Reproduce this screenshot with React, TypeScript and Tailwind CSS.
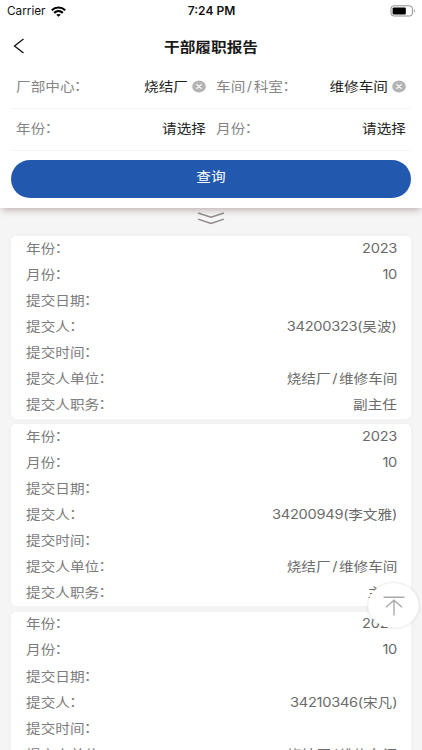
type Entry = { year: string; month: string; person: string; unit: string; duty: string };

const entries: Entry[] = [
  { year: "2023", month: "10", person: "34200323(吴波)", unit: "烧结厂/维修车间", duty: "副主任" },
  { year: "2023", month: "10", person: "34200949(李文雅)", unit: "烧结厂/维修车间", duty: "主任" },
  { year: "2023", month: "10", person: "34210346(宋凡)", unit: "烧结厂/维修车间", duty: "主任" },
];

function Parts({ text }: { text: string }) {
  return (
    <>
      {text.split(/([\d(]+|\/)/).map((part, i) => (
        <span key={i} className={/\d/.test(part) ? "tracking-[-0.26px]" : part === "/" ? "mx-[1.4px]" : ""}>
          {part}
        </span>
      ))}
    </>
  );
}

function Label({ text }: { text: string }) {
  return (
    <span className="inline-block origin-left scale-x-[1.125] whitespace-nowrap">
      <Parts text={text} />
      <span className="relative -top-px -ml-[0.5px]">：</span>
    </span>
  );
}

function Value({ text }: { text: string }) {
  return (
    <span className="inline-block origin-right scale-x-[1.125] whitespace-nowrap">
      <Parts text={text} />
    </span>
  );
}

function StatusBar() {
  return (
    <div className="grid h-[22px] grid-cols-3 items-center pl-[7px] pr-[6px] text-[12px] text-[#111]">
      <div className="flex items-center gap-[5px]">
        <span className="w-[39px] origin-left scale-x-[0.98]">Carrier</span>
        <svg width="15" height="11" viewBox="0 0 15 11" fill="none" stroke="#000" strokeWidth="2.2">
          <path d="M0.8 4.2C4.6 0.6 10.4 0.6 14.2 4.2" />
          <path d="M3.2 6.9C5.7 4.5 9.3 4.5 11.8 6.9" />
          <path d="M7.5 10.8L5.2 8.8C6.5 7.6 8.5 7.6 9.8 8.8Z" fill="#000" stroke="none" />
        </svg>
      </div>
      <div className="text-center font-semibold">
        <span className="inline-block whitespace-nowrap">7:24 PM</span>
      </div>
      <div className="flex justify-end">
        <svg width="26" height="12" viewBox="0 0 26 12" fill="none">
          <rect x="1" y="0.8" width="21.4" height="10.2" rx="2.8" stroke="#8c8c8c" />
          <rect x="2.6" y="2.4" width="13.2" height="7" rx="1.2" fill="#000" />
          <path d="M24 4.2C25.2 4.8 25.2 7 24 7.6Z" fill="#8c8c8c" />
        </svg>
      </div>
    </div>
  );
}

function Field({ label, value, clearable }: { label: string; value: string; clearable?: boolean }) {
  return (
    <div className="flex w-[190px] items-center justify-between">
      <span className="text-[#858585]"><Label text={label} /></span>
      <span className="flex items-center gap-[4px] text-[#222]">
        <Value text={value} />
        {clearable && (
          <svg width="14" height="13" viewBox="0 0 14 13">
            <ellipse cx="7" cy="6.5" rx="6.8" ry="6.1" fill="#b4b4b4" />
            <path d="M4.4 4.1L9.6 8.9M9.6 4.1L4.4 8.9" stroke="#fff" strokeWidth="1.1" />
          </svg>
        )}
      </span>
    </div>
  );
}

function Card({ entry }: { entry: Entry }) {
  const rows = [
    ["年份", entry.year],
    ["月份", entry.month],
    ["提交日期", ""],
    ["提交人", entry.person],
    ["提交时间", ""],
    ["提交人单位", entry.unit],
    ["提交人职务", entry.duty],
  ];
  return (
    <div className="h-[182.6px] shrink-0 rounded-[5px] bg-white pl-[15px] pr-[14px] shadow-[0_0_5px_rgba(0,0,0,0.035)]">
      {rows.map(([label, value]) => (
        <div key={label} className="flex h-[26.08px] items-center justify-between pb-[2.4px]">
          <span className="text-[#7c7c7c]"><Label text={label} /></span>
          <span className="text-[#6b6b6b]"><Value text={value} /></span>
        </div>
      ))}
    </div>
  );
}

export default function App() {
  return (
    <div className="relative flex h-[750px] w-[422px] flex-col overflow-hidden bg-[#f5f5f5] font-[Inter,'Noto_Sans_CJK_SC',sans-serif] text-[13px] leading-[20px]">
      <header className="h-[208px] shrink-0 bg-white shadow-[0_4px_7px_-2px_rgba(90,50,50,0.36)]">
        <StatusBar />
        <div className="grid h-[48px] grid-cols-[40px_1fr_40px] items-center">
          <svg className="ml-[13px]" width="12" height="16" viewBox="0 0 12 16" fill="none" stroke="#111" strokeWidth="1.3">
            <path d="M10.5 1L1.5 8L10.5 15" />
          </svg>
          <h1 className="pt-[2px] text-center text-[14px] font-bold text-[#1a1a1a]">
            <span className="inline-block scale-x-[1.12]">干部履职报告</span>
          </h1>
        </div>
        <div className="mx-[11px] flex h-[38.5px] items-center justify-between border-b border-[#f4f4f4] px-[5px] pb-[5px]">
          <Field label="厂部中心" value="烧结厂" clearable />
          <Field label="车间/科室" value="维修车间" clearable />
        </div>
        <div className="mx-[11px] flex h-[42px] items-center justify-between border-b border-[#f4f4f4] px-[5px] pb-[3px]">
          <Field label="年份" value="请选择" />
          <Field label="月份" value="请选择" />
        </div>
        <button className="mx-[11px] mt-[9.5px] flex h-[37.5px] w-[400px] items-center justify-center rounded-full bg-[#2259ae] pb-[6px] text-white">
          <span className="inline-block scale-x-[1.125]">查询</span>
        </button>
      </header>
      <div className="flex h-[28px] shrink-0 justify-center pt-[4px]">
        <svg width="28" height="13" viewBox="0 0 28 13" fill="none" stroke="#8e8888" strokeWidth="1.4">
          <path d="M1 1L14 5.2L27 1M1 7.2L14 11.4L27 7.2" />
        </svg>
      </div>
      <main className="flex flex-col gap-[5.2px] px-[11px]">
        {entries.map((entry) => (
          <Card key={entry.person} entry={entry} />
        ))}
      </main>
      <button className="absolute left-[368px] top-[583px] flex h-[45px] w-[51px] items-center justify-center rounded-[50%] bg-white shadow-[0_0_3px_rgba(0,0,0,0.16)]">
        <svg width="22" height="20" viewBox="0 0 22 20" fill="none" stroke="#aaa" strokeWidth="1.4">
          <path d="M0.5 1.2H21.5M11 4V19.5M3 11.2L11 4.2L19 11.2" />
        </svg>
      </button>
    </div>
  );
}
